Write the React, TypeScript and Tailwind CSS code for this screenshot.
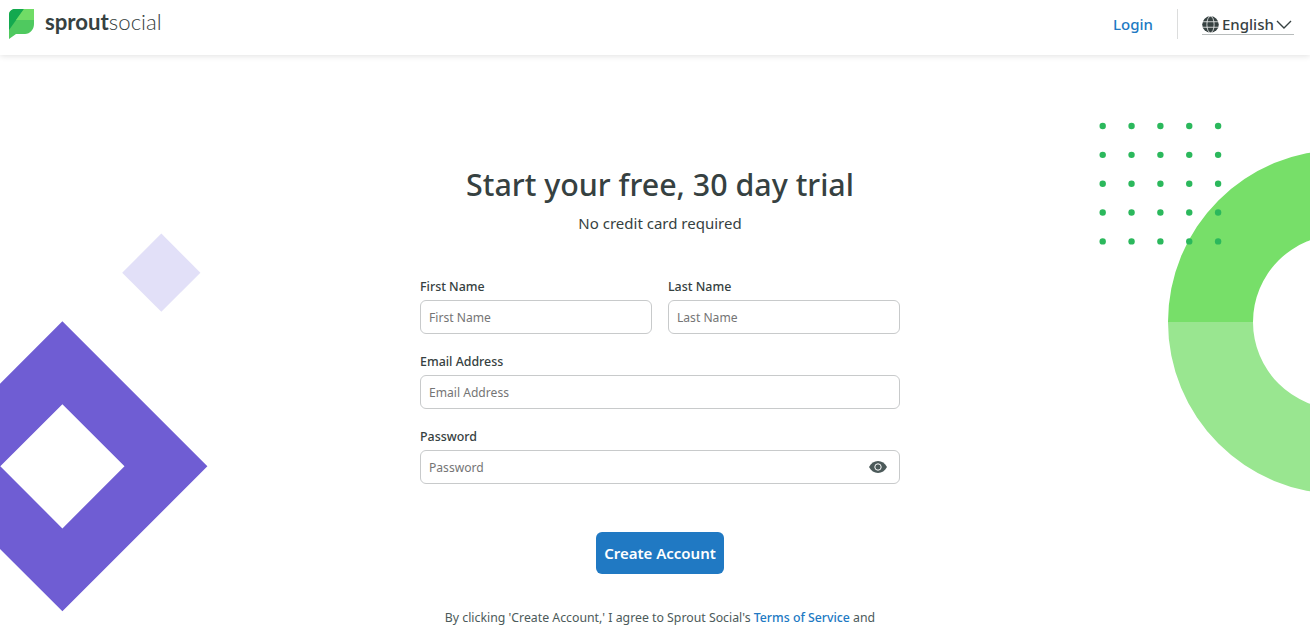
import React from "react";

function Logo() {
  return (
    <svg width="26" height="30" viewBox="0 0 26 30" className="shrink-0">
      <path d="M6 0H25V15C25 20.5 21 25 16 25H7L0 30V6C0 2.5 2.5 0 6 0Z" fill="#4fc95f" />
      <path d="M6 0H15L0 21V6C0 2.5 2.5 0 6 0Z" fill="#13a94f" />
      <path d="M15 0H25V11H7Z" fill="#70dc66" />
    </svg>
  );
}

function Decor() {
  const xs = [0, 1, 2, 3, 4];
  return (
    <div className="absolute inset-0 overflow-hidden pointer-events-none">
      <svg width="1310" height="632" viewBox="0 0 1310 632" className="absolute left-0 top-0">
        <path d="M62.4 321.3L207.4 466.3L62.4 611.3L-82.6 466.3ZM62.4 404.2L0.3 466.3L62.4 528.4L124.5 466.3Z" fill="#6f5dd3" fillRule="evenodd" />
        <path d="M161.3 233.6L200.4 272.7L161.3 311.8L122.2 272.7Z" fill="#e2e0f8" />
        <path d="M1168 322A172 172 0 0 1 1340 150V235A87 87 0 0 0 1253 322Z" fill="#77df69" />
        <path d="M1168 322A172 172 0 0 0 1340 494V409A87 87 0 0 1 1253 322Z" fill="#99e690" />
        {xs.map((j) =>
          xs.map((i) => (
            <circle key={`${i}-${j}`} cx={1102.7 + i * 28.85} cy={126 + j * 28.85} r="3.2" fill="#2bb85c" />
          ))
        )}
      </svg>
    </div>
  );
}

function Field({ label, children }: { label: string; children: React.ReactNode }) {
  return (
    <div className="flex flex-col flex-1 min-w-0">
      <label className="text-[12.4px] leading-[20px] font-medium text-[#364141] mb-[3px]">{label}</label>
      {children}
    </div>
  );
}

const inputClass =
  "w-full h-[34px] border border-[#c8cacb] rounded-[6px] px-2 text-[12.1px] text-[#364141] bg-white outline-none placeholder:text-[#757575]";

export default function App() {
  return (
    <div
      className="relative w-full h-[632px] overflow-hidden bg-white text-[#364141]"
      style={{ fontFamily: '"Noto Sans", "Open Sans", sans-serif' }}
    >
      <Decor />
      <header className="relative h-[55px] bg-white flex items-center justify-between pl-[9px] pr-4 shadow-[0_1px_6px_rgba(0,0,0,0.12)]">
        <div className="flex items-center gap-[10px] -mt-[7px]">
          <Logo />
          <div className="text-[22.2px] leading-none -mt-[3px]" style={{ fontFamily: '"Lato", sans-serif' }}>
            <span className="font-bold text-[#364141]">sprout</span>
            <span className="font-light text-[#364141]">social</span>
          </div>
        </div>
        <div className="flex items-center -mt-[7px]">
          <a className="text-[15px] text-[#2079c3] font-medium mr-6">Login</a>
          <div className="w-px h-[30px] bg-[#dcdddd] mr-6" />
          <div className="flex items-center gap-[3px] border-b border-[#b8bcbc] h-[20px] mt-[1px] w-[92px]">
            <svg width="17" height="17" viewBox="0 0 16 16" className="shrink-0">
              <circle cx="8" cy="8" r="7.8" fill="#364141" />
              <g stroke="#fff" strokeWidth="0.7" fill="none">
                <ellipse cx="8" cy="8" rx="3.4" ry="7.8" />
                <path d="M0.4 5.4H15.6M0.4 10.6H15.6" />
              </g>
            </svg>
            <span className="text-[15px] font-medium leading-none text-[#364141]">English</span>
            <svg width="16" height="9" viewBox="0 0 16 9" className="shrink-0 -ml-[1px]">
              <path d="M1 1L8 8L15 1" stroke="#364141" strokeWidth="1.4" fill="none" />
            </svg>
          </div>
        </div>
      </header>

      <main className="relative flex flex-col items-center pt-[109px] pl-[10px]">
        <h1 className="text-[30.4px] leading-[42px] font-medium text-[#364141]">Start your free, 30 day trial</h1>
        <p className="text-[15px] leading-[20px] mt-[7px] text-[#364141]">No credit card required</p>

        <form className="w-[480px] mt-[44px] flex flex-col gap-[18px]">
          <div className="flex gap-4">
            <Field label="First Name">
              <input className={inputClass} placeholder="First Name" />
            </Field>
            <Field label="Last Name">
              <input className={inputClass} placeholder="Last Name" />
            </Field>
          </div>
          <Field label="Email Address">
            <input className={inputClass} placeholder="Email Address" />
          </Field>
          <Field label="Password">
            <div className="relative">
              <input className={inputClass} placeholder="Password" />
              <svg width="18" height="12" viewBox="0 0 18 12" className="absolute right-[13px] top-[11px]">
                <path d="M0 6C2 2.3 5.2 0 9 0S16 2.3 18 6C16 9.7 12.8 12 9 12S2 9.7 0 6Z" fill="#4c5a5a" />
                <circle cx="9" cy="6" r="3.2" fill="none" stroke="#fff" strokeWidth="1" />
              </svg>
            </div>
          </Field>
          <button
            type="button"
            className="self-center mt-[30px] w-[128px] h-[42px] rounded-[6px] bg-[#2079c3] text-white text-[15px] font-semibold"
          >
            Create Account
          </button>
        </form>

        <p className="text-[12.3px] leading-[18px] mt-[35px] text-[#4c5a5a] whitespace-nowrap">
          By clicking 'Create Account,' I agree to Sprout Social's{" "}
          <a className="text-[#2079c3] font-medium">Terms of Service</a> and
        </p>
      </main>
    </div>
  );
}
